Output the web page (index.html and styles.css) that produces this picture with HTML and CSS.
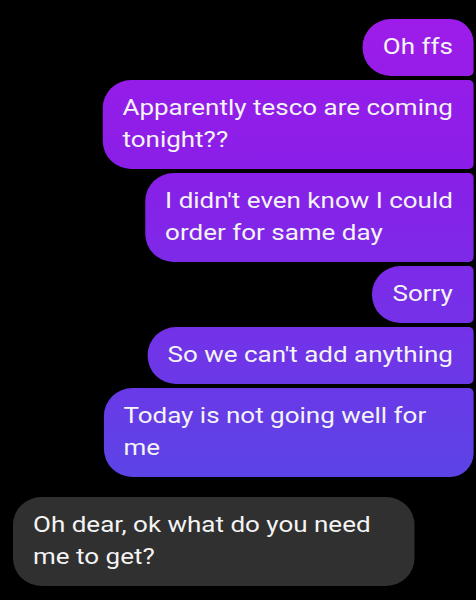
FILE: index.html
```html
<!DOCTYPE html>
<html lang="en">
    <head>
        <title>chat</title>
        <meta charset="utf-8" />
        <meta name="viewport" content="width=device-width, initial-scale=1.0" />
        <link rel="stylesheet" href="styles.css">
    </head>
    <body>
        <div id="thread">
            <div class="group sent">
                <div class="msg first">Oh ffs</div>
                <div class="msg">Apparently tesco are coming<br>tonight??</div>
                <div class="msg">I didn't even know I could<br>order for same day</div>
                <div class="msg">Sorry</div>
                <div class="msg">So we can't add anything</div>
                <div class="msg last">Today is not going well for me</div>
            </div>
            <div class="group received">
                <div class="msg first last">Oh dear, ok what do you need me to get?</div>
            </div>
        </div>
    </body>
</html>
```

FILE: styles.css
```css
html, body {
    margin: 0px;
    padding: 0px;
    background: black;
    font-family: Roboto, "Noto Sans", sans-serif;
    overflow: hidden;
}
/* the capture is stretched wider than tall, so the thread is too */
#thread {
    display: flex;
    flex-direction: column;
    gap: 20px;
    box-sizing: border-box;
    width: 403px;
    padding: 19px 2.5px 0px 11px;
    transform: scaleX(1.181);
    transform-origin: left top;
}
.group {
    display: flex;
    flex-direction: column;
    gap: 4px;
}
.msg {
    box-sizing: border-box;
    padding: 12px 17px 13px;
    line-height: 32px;
    font-size: 22px;
    color: #f4f4f4;
}
.sent .msg {
    align-self: flex-end;
    max-width: 318px;
    border-radius: 24px 4px 4px 24px / 28px 5px 5px 28px;
    background-image: linear-gradient(to bottom, #9e1ce9 0%, #8a1ee8 32%, #7531e8 66%, #5b44e6 100%);
    background-size: 100% 458px;
    background-repeat: no-repeat;
}
.sent .msg:nth-child(2) {
    background-position: 0px -61px;
}
.sent .msg:nth-child(3) {
    background-position: 0px -154px;
}
.sent .msg:nth-child(4) {
    background-position: 0px -247px;
}
.sent .msg:nth-child(5) {
    background-position: 0px -308px;
}
.sent .msg:nth-child(6) {
    background-position: 0px -369px;
}
.sent .first {
    border-top-right-radius: 20px 24px;
}
.sent .last {
    max-width: 313px;
    border-bottom-right-radius: 20px 24px;
}
.received .msg {
    align-self: flex-start;
    width: 340px;
    border-radius: 24px / 28px;
    background: #303030;
}
```
